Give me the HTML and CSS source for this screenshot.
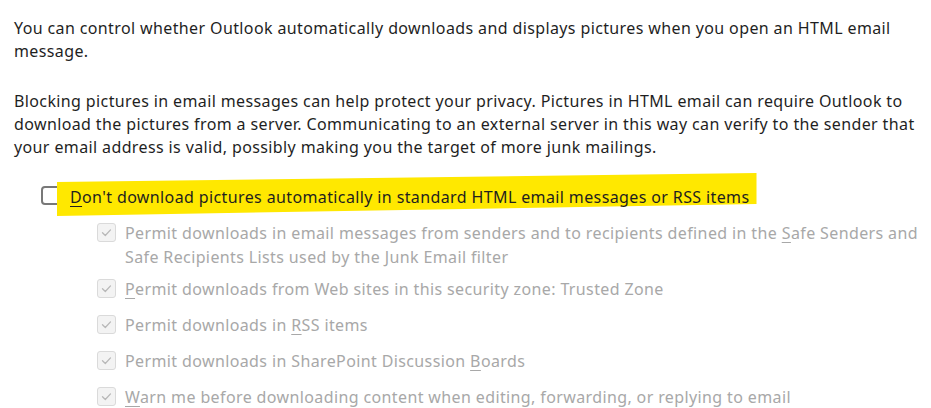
FILE: index.html
```html
<!DOCTYPE html>
<html>
<head>
<meta charset="utf-8">
<link rel="stylesheet" href="styles.css">
</head>
<body>
<div class="page">
  <p class="para">You can control whether Outlook automatically downloads and displays pictures when you open an HTML email message.</p>
  <p class="para para-last">Blocking pictures in email messages can help protect your privacy. Pictures in HTML email can require Outlook to download the pictures from a server. Communicating to an external server in this way can verify to the sender that your email address is valid, possibly making you the target of more junk mailings.</p>

  <div class="main-row">
    <span class="box"></span>
    <span class="label hl"><span class="hl-text"><u>D</u>on't download pictures automatically in standard HTML email messages or RSS items</span></span>
  </div>

  <div class="subs">
    <div class="sub-row sub-first">
      <span class="dbox"><svg viewBox="0 0 19 19" width="19" height="19"><path d="M5.5 9.8 L8.3 12.5 L13.5 6.9" fill="none" stroke="#b8b8b8" stroke-width="1.3" stroke-linecap="round" stroke-linejoin="round"/></svg></span>
      <span class="dlabel">Permit downloads in email messages from senders and to recipients defined in the <u>S</u>afe Senders and Safe Recipients Lists used by the Junk Email filter</span>
    </div>
    <div class="sub-row">
      <span class="dbox"><svg viewBox="0 0 19 19" width="19" height="19"><path d="M5.5 9.8 L8.3 12.5 L13.5 6.9" fill="none" stroke="#b8b8b8" stroke-width="1.3" stroke-linecap="round" stroke-linejoin="round"/></svg></span>
      <span class="dlabel"><u>P</u>ermit downloads from Web sites in this security zone: Trusted Zone</span>
    </div>
    <div class="sub-row">
      <span class="dbox"><svg viewBox="0 0 19 19" width="19" height="19"><path d="M5.5 9.8 L8.3 12.5 L13.5 6.9" fill="none" stroke="#b8b8b8" stroke-width="1.3" stroke-linecap="round" stroke-linejoin="round"/></svg></span>
      <span class="dlabel">Permit downloads in <u>R</u>SS items</span>
    </div>
    <div class="sub-row">
      <span class="dbox"><svg viewBox="0 0 19 19" width="19" height="19"><path d="M5.5 9.8 L8.3 12.5 L13.5 6.9" fill="none" stroke="#b8b8b8" stroke-width="1.3" stroke-linecap="round" stroke-linejoin="round"/></svg></span>
      <span class="dlabel">Permit downloads in SharePoint Discussion <u>B</u>oards</span>
    </div>
    <div class="sub-row">
      <span class="dbox"><svg viewBox="0 0 19 19" width="19" height="19"><path d="M5.5 9.8 L8.3 12.5 L13.5 6.9" fill="none" stroke="#b8b8b8" stroke-width="1.3" stroke-linecap="round" stroke-linejoin="round"/></svg></span>
      <span class="dlabel"><u>W</u>arn me before downloading content when editing, forwarding, or replying to email</span>
    </div>
  </div>
</div>
</body>
</html>
```

FILE: styles.css
```css
html, body {
  margin: 0;
  padding: 0;
  background: #ffffff;
}
body {
  font-family: "Noto Sans", "Open Sans", sans-serif;
  font-size: 16px;
  letter-spacing: 0.38px;
  line-height: 23px;
  color: #1f1f1f;
  overflow: hidden;
}
.page {
  padding: 17px 6px 0 14px;
  width: 931px;
  box-sizing: border-box;
}
.para {
  margin: 0 0 27px 0;
}
.para-last {
  margin-bottom: 0;
}
.main-row {
  display: flex;
  align-items: flex-start;
  gap: 9px;
  margin-left: 27px;
  margin-top: 26px;
  line-height: 24px;
}
.box {
  width: 20px;
  height: 19px;
  box-sizing: border-box;
  border: 2px solid #787878;
  border-radius: 4px;
  flex: none;
  background: #fff;
  margin-top: 1px;
}
.label {
  position: relative;
}
.hl::before {
  content: "";
  position: absolute;
  left: -13px;
  right: -7px;
  top: -12px;
  bottom: -7px;
  background: #ffe800;
  clip-path: polygon(0 21%, 100% 0, 100% 72%, 0 100%);
  z-index: 0;
}
.hl-text {
  position: relative;
  z-index: 1;
}
u {
  text-decoration: underline;
  text-underline-offset: 3px;
  text-decoration-thickness: 1px;
}
.subs {
  display: flex;
  flex-direction: column;
  gap: 12px;
  margin-left: 83px;
  margin-top: 12px;
  line-height: 24px;
}
.sub-row {
  display: flex;
  align-items: flex-start;
  gap: 9px;
}
.sub-first {
  margin-bottom: -4px;
}
.dbox {
  width: 19px;
  height: 19px;
  box-sizing: border-box;
  border: 1px solid #dadada;
  border-radius: 3px;
  background: #f3f3f3;
  flex: none;
  margin-top: 2px;
  position: relative;
}
.dbox svg {
  display: block;
  margin: -1px;
}
.dlabel {
  color: #a8a8a8;
}
```
